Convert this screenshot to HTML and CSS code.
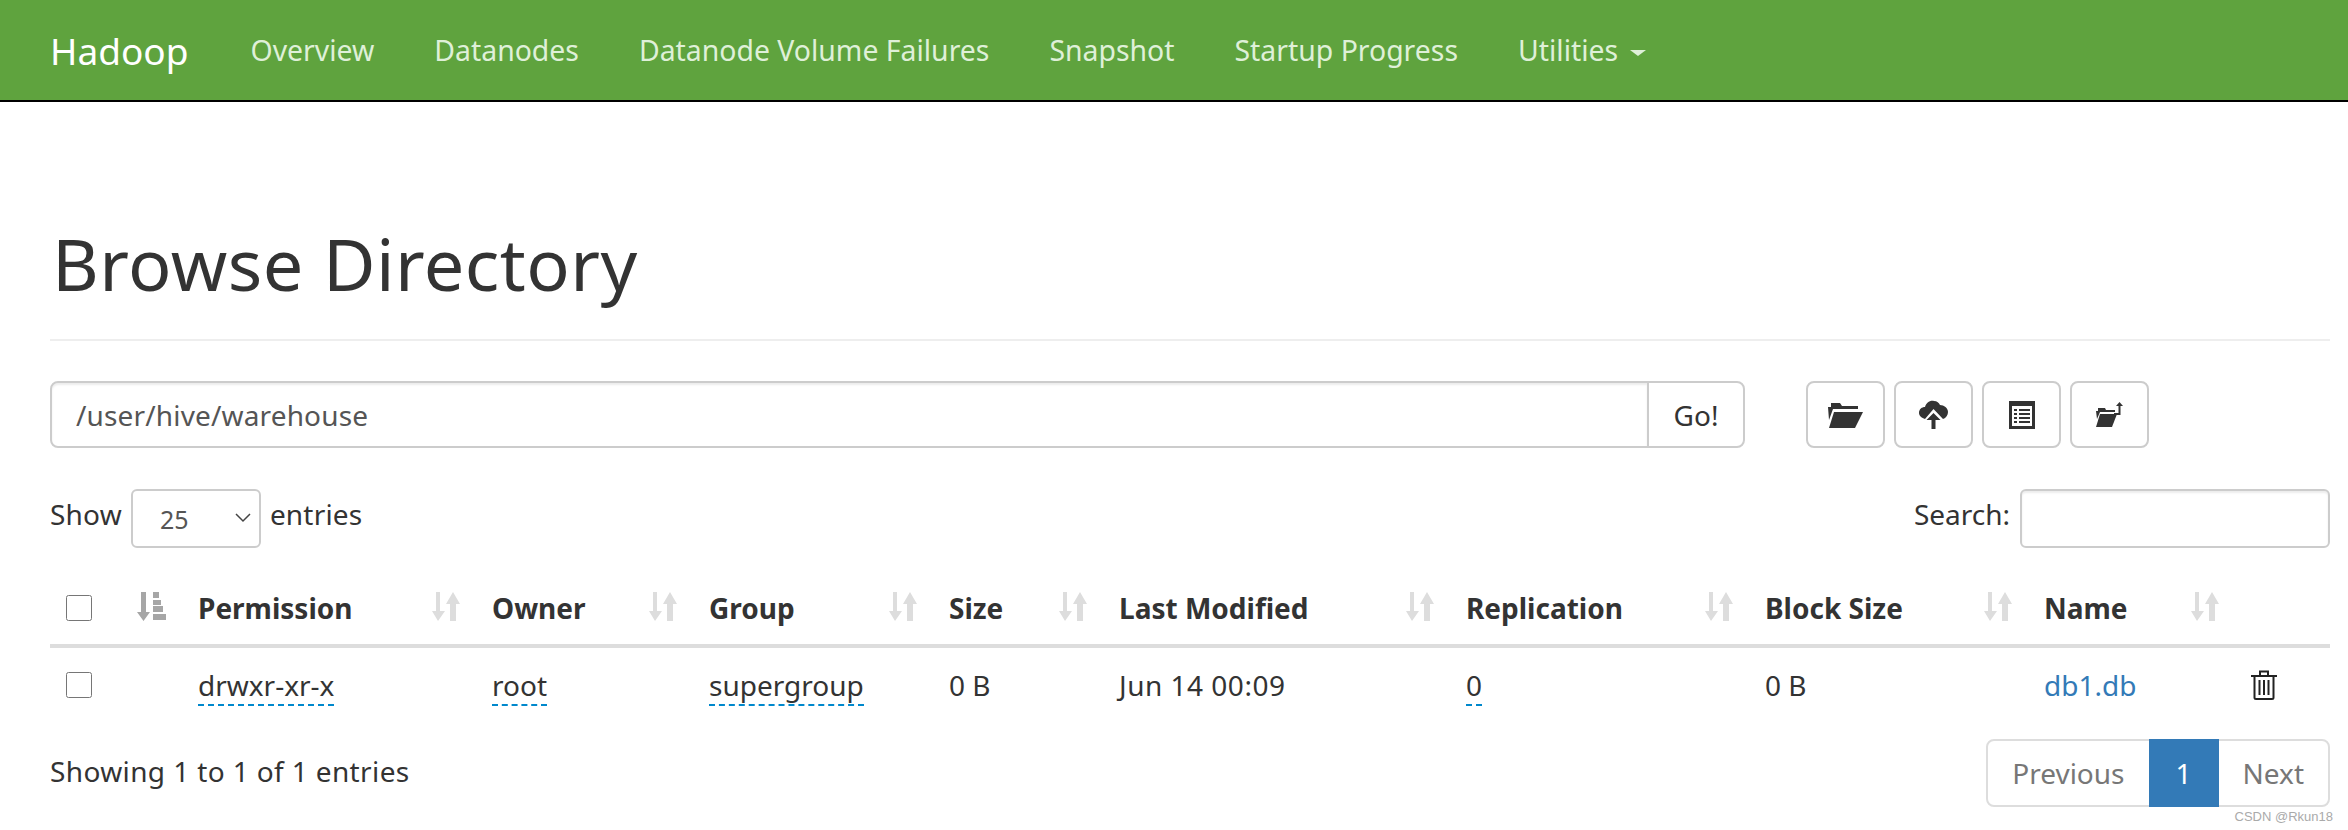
FILE: index.html
```html
<!DOCTYPE html>
<html lang="en">
<head>
    <meta charset="UTF-8">
    <title>Browsing HDFS</title>
    <link rel="stylesheet" href="styles.css">
</head>
<body>
    <nav class="navbar">
        <a class="brand" href="#">Hadoop</a>
        <a class="nav-link" href="#">Overview</a>
        <a class="nav-link" href="#">Datanodes</a>
        <a class="nav-link" href="#">Datanode Volume Failures</a>
        <a class="nav-link" href="#">Snapshot</a>
        <a class="nav-link" href="#">Startup Progress</a>
        <a class="nav-link" href="#">Utilities <span class="caret"></span></a>
    </nav>

    <div class="container">
        <h1 class="page-title">Browse Directory</h1>

        <div class="path-row">
            <div class="path-group">
                <input class="path-input" type="text" value="/user/hive/warehouse">
                <button class="go-btn">Go!</button>
            </div>
            <div class="tools">
                <button class="tool-btn">
                    <svg width="35" height="26" viewBox="0 0 35 26"><path fill="#333" d="M0 5h3V1h9l2 3h16v3H5L1 18z"/><path fill="#333" d="M6 10h29l-8 16H1z"/></svg>
                </button>
                <button class="tool-btn">
                    <svg width="29" height="29" viewBox="0 0 29 29"><path fill="#333" d="M0 13C0 9 3 7 6 7 7 3 11 0 15 1c3 0 5 2 6 4 4 0 8 3 8 7 0 3-2 6-5 7L14.500 9 6 19c-3-1-6-3-6-6z"/><path fill="#333" d="M14.500 13l7 7h-5v9h-4v-9h-5z"/></svg>
                </button>
                <button class="tool-btn">
                    <svg width="26" height="28" viewBox="0 0 26 28"><path fill="#333" fill-rule="evenodd" d="M0 0h26v28H0zM3 5v20h20V5z"/><path fill="#333" d="M5 8h3v2H5zM10 8h11v2H10zM5 12h3v2H5zM10 12h11v2H10zM5 16h3v2H5zM10 16h11v2H10zM5 20h3v2H5zM10 20h11v2H10z"/></svg>
                </button>
                <button class="tool-btn">
                    <svg width="27" height="25" viewBox="0 0 27 25"><path fill="#333" d="M0 9h2V6h7l1 2h9v2H4L1 17z"/><path fill="#333" d="M4 12h17l-5 13H0z"/><path fill="#333" d="M23.500 0l3.500 4h-2.500v9H18v-2h4.500V4H20z"/></svg>
                </button>
            </div>
        </div>

        <div class="filter-row">
            <label class="length-label">Show
                <span class="select-wrap">
                    <select class="length-select"><option>25</option></select>
                    <svg class="select-arrow" width="16" height="10" viewBox="0 0 16 10"><path fill="none" stroke="#444" stroke-width="1.500" d="M1 1l7 7 7-7"/></svg>
                </span>
                entries</label>
            <label class="search-label">Search: <input class="search-input" type="text"></label>
        </div>

        <table class="listing">
            <colgroup>
                <col class="c-check"><col class="c-sort"><col class="c-perm"><col class="c-owner"><col class="c-group"><col class="c-size"><col class="c-date"><col class="c-repl"><col class="c-block"><col class="c-name"><col class="c-del">
            </colgroup>
            <thead>
                <tr>
                    <th><input class="check" type="checkbox"></th>
                    <th class="sort-only"><svg class="sort-icon" width="29" height="29" viewBox="0 0 29 29"><path fill="#a6a6a6" d="M4 0h5v20h4l-6.500 9L0 20h4zM16 0h6v6h-6zM16 8h8v5h-8zM16 14h10v6H16zM16 22h13v6H16z"/></svg></th>
                    <th>Permission<svg class="sort-icon" width="28" height="29" viewBox="0 0 28 29"><use href="#sort"/></svg></th>
                    <th>Owner<svg class="sort-icon" width="28" height="29" viewBox="0 0 28 29"><use href="#sort"/></svg></th>
                    <th>Group<svg class="sort-icon" width="28" height="29" viewBox="0 0 28 29"><use href="#sort"/></svg></th>
                    <th>Size<svg class="sort-icon" width="28" height="29" viewBox="0 0 28 29"><use href="#sort"/></svg></th>
                    <th>Last Modified<svg class="sort-icon" width="28" height="29" viewBox="0 0 28 29"><use href="#sort"/></svg></th>
                    <th>Replication<svg class="sort-icon" width="28" height="29" viewBox="0 0 28 29"><use href="#sort"/></svg></th>
                    <th>Block Size<svg class="sort-icon" width="28" height="29" viewBox="0 0 28 29"><use href="#sort"/></svg></th>
                    <th>Name<svg class="sort-icon" width="28" height="29" viewBox="0 0 28 29"><use href="#sort"/></svg></th>
                    <th></th>
                </tr>
            </thead>
            <tbody>
                <tr>
                    <td><input class="check" type="checkbox"></td>
                    <td></td>
                    <td><span class="editable">drwxr-xr-x</span></td>
                    <td><span class="editable">root</span></td>
                    <td><span class="editable">supergroup</span></td>
                    <td>0 B</td>
                    <td class="modified">Jun 14 00:09</td>
                    <td><span class="editable">0</span></td>
                    <td>0 B</td>
                    <td><a class="file-link" href="#">db1.db</a></td>
                    <td>
                        <svg class="trash" width="26" height="30" viewBox="0 0 26 30"><path fill="none" stroke="#222" stroke-width="2" d="M0 6h26M9 5V1.500h8V5M3.500 6v21.500q0 1.500 1.500 1.500h16q1.500 0 1.500-1.500V6M8.500 10v15M13 10v15M17.500 10v15"/></svg>
                    </td>
                </tr>
            </tbody>
        </table>

        <div class="table-foot">
            <div class="info">Showing 1 to 1 of 1 entries</div>
            <div class="pagination">
                <a class="page-item" href="#">Previous</a>
                <a class="page-item active" href="#">1</a>
                <a class="page-item" href="#">Next</a>
            </div>
        </div>
    </div>

    <span class="watermark">CSDN @Rkun18</span>

    <svg width="0" height="0" class="defs">
        <symbol id="sort" viewBox="0 0 28 29"><path fill="#ddd" d="M4 0h4v19h5l-7 10-6-10h4zM21 0l7 12h-4v17h-6V12h-4z"/></symbol>
    </svg>
</body>
</html>
```

FILE: styles.css
```css
html, body {
    margin: 0;
    background-color: #fff;
}

body {
    position: relative;
    height: 830px;
    overflow: hidden;
    font-family: 'Noto Sans', 'Open Sans', sans-serif;
    font-size: 28px;
    color: #333;
}

a {
    text-decoration: none;
}

.defs {
    position: absolute;
}

/* top bar */
.navbar {
    display: flex;
    align-items: center;
    gap: 60px;
    height: 100px;
    padding-left: 50px;
    background-color: #5fa33e;
    border-bottom: 2px solid #000;
}

.brand {
    margin-right: 2px;
    font-size: 37px;
    color: #fff;
}

.nav-link {
    font-size: 28.400px;
    color: #dff0d8;
}

.caret {
    display: inline-block;
    margin-left: 4px;
    vertical-align: middle;
    border-top: 6px solid #dff0d8;
    border-left: 8px solid transparent;
    border-right: 8px solid transparent;
}

.container {
    padding: 0 18px 0 50px;
}

.page-title {
    margin: 0;
    padding: 112px 0 27px 2px;
    font-size: 72px;
    font-weight: 400;
    line-height: 98px;
    letter-spacing: 0.470px;
    border-bottom: 2px solid #eee;
}

/* path box and tool buttons */
.path-row {
    display: flex;
    margin-top: 40px;
    gap: 61px;
}

.path-group {
    display: flex;
    width: 1695px;
    height: 67px;
}

.path-input {
    flex: 1;
    min-width: 0;
    padding: 0 24px;
    font: inherit;
    letter-spacing: 0.150px;
    color: #555;
    border: 2px solid #ccc;
    border-radius: 8px 0 0 8px;
    box-shadow: inset 0 2px 2px rgba(0, 0, 0, 0.075);
}

.go-btn {
    width: 98px;
    margin-left: -2px;
    font: inherit;
    color: #333;
    background-color: #fff;
    border: 2px solid #ccc;
    border-radius: 0 8px 8px 0;
}

.tools {
    display: flex;
    gap: 9px;
}

.tool-btn {
    display: flex;
    align-items: center;
    justify-content: center;
    width: 79px;
    height: 67px;
    padding: 0;
    background-color: #fff;
    border: 2px solid #ccc;
    border-radius: 8px;
}

/* show / search */
.filter-row {
    display: flex;
    justify-content: space-between;
    align-items: flex-start;
    margin-top: 41px;
    height: 59px;
    line-height: 51px;
}

.length-label, .search-label {
    display: flex;
    align-items: flex-start;
    gap: 10px;
}

.length-label {
    gap: 9px;
    letter-spacing: 0.200px;
}

.select-wrap {
    position: relative;
    display: block;
}

.length-select {
    display: block;
    width: 130px;
    height: 59px;
    padding: 0 0 0 27px;
    font-family: inherit;
    font-size: 25px;
    color: #555;
    background-color: #fff;
    border: 2px solid #ccc;
    border-radius: 6px;
    appearance: none;
}

.select-arrow {
    position: absolute;
    top: 24px;
    right: 10px;
}

.search-input {
    width: 310px;
    height: 59px;
    box-sizing: border-box;
    border: 2px solid #ccc;
    border-radius: 6px;
    box-shadow: inset 0 2px 2px rgba(0, 0, 0, 0.075);
}

/* table */
.listing {
    width: 2280px;
    margin-top: 29px;
    border-collapse: collapse;
    table-layout: fixed;
}

.c-check { width: 71px; }
.c-sort { width: 61px; }
.c-perm { width: 294px; }
.c-owner { width: 217px; }
.c-group { width: 240px; }
.c-size { width: 170px; }
.c-date { width: 347px; }
.c-repl { width: 299px; }
.c-block { width: 279px; }
.c-name { width: 207px; }
.c-del { width: 95px; }

.listing th {
    position: relative;
    height: 69px;
    padding: 0 16px 6px;
    box-sizing: border-box;
    text-align: left;
    font-weight: 700;
    white-space: nowrap;
    border-bottom: 4px solid #ddd;
}

.listing td {
    height: 74px;
    padding: 0 16px;
    white-space: nowrap;
}

.modified {
    letter-spacing: 0.500px;
}

.check {
    display: block;
    width: 26px;
    height: 26px;
    margin: 0;
}

.sort-icon {
    position: absolute;
    top: 15px;
    right: 16px;
}

.editable {
    border-bottom: 2px dashed #0088cc;
}

.file-link {
    color: #337ab7;
}

.trash {
    display: block;
}

/* footer */
.table-foot {
    display: flex;
    justify-content: space-between;
    align-items: center;
    margin-top: 17px;
}

.info {
    padding-bottom: 4px;
    letter-spacing: 0.380px;
}

.pagination {
    display: flex;
    height: 68px;
    box-sizing: border-box;
    border: 2px solid #ddd;
    border-radius: 8px;
}

.page-item {
    display: flex;
    align-items: center;
    padding: 0 24px;
    color: #777;
}

.page-item.active {
    margin: -2px 0;
    padding: 0 27px;
    color: #fff;
    background-color: #337ab7;
}

.watermark {
    position: absolute;
    right: 15px;
    bottom: 6px;
    font-family: 'Liberation Sans', sans-serif;
    font-size: 13px;
    color: #aaa;
}
```
